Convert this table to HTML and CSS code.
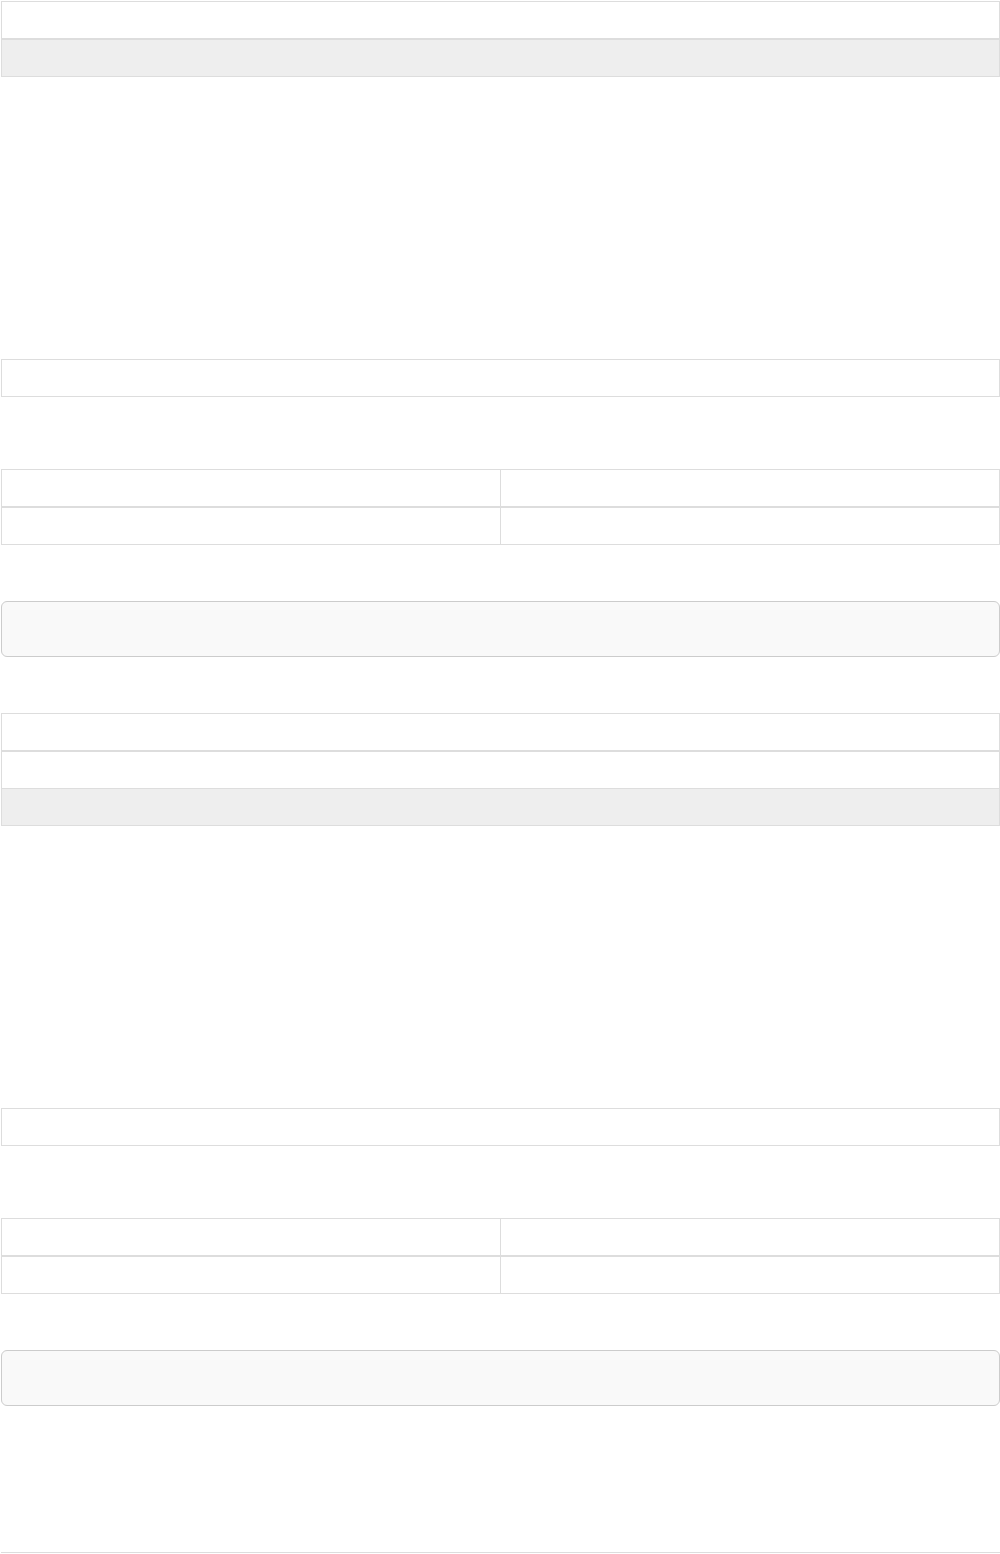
FILE: index.html
```html
<!DOCTYPE html>
<html lang="en">
<head>
  <meta charset="UTF-8" />
  <title>Tables</title>
  <link rel="stylesheet" href="styles.css">
</head>
<body>
  <div class="page">

    <!-- Bloco 1 -->
    <table class="grade grade-topo">
      <thead>
        <tr><th>&nbsp;</th></tr>
      </thead>
      <tbody>
        <tr class="ativo"><td>&nbsp;</td></tr>
      </tbody>
    </table>

    <table class="grade grade-simples">
      <tbody>
        <tr><td>&nbsp;</td></tr>
      </tbody>
    </table>

    <table class="grade grade-dupla">
      <thead>
        <tr><th>&nbsp;</th><th>&nbsp;</th></tr>
      </thead>
      <tbody>
        <tr><td>&nbsp;</td><td>&nbsp;</td></tr>
      </tbody>
    </table>

    <div class="caixa">&nbsp;</div>

    <!-- Bloco 2 -->
    <table class="grade grade-lista">
      <thead>
        <tr><th>&nbsp;</th></tr>
      </thead>
      <tbody>
        <tr><td>&nbsp;</td></tr>
        <tr class="ativo"><td>&nbsp;</td></tr>
      </tbody>
    </table>

    <table class="grade grade-simples">
      <tbody>
        <tr><td>&nbsp;</td></tr>
      </tbody>
    </table>

    <table class="grade grade-dupla">
      <thead>
        <tr><th>&nbsp;</th><th>&nbsp;</th></tr>
      </thead>
      <tbody>
        <tr><td>&nbsp;</td><td>&nbsp;</td></tr>
      </tbody>
    </table>

    <div class="caixa">&nbsp;</div>

    <hr class="rodape" />
  </div>
</body>
</html>
```

FILE: styles.css
```css
body {
  margin: 0;
  padding: 0;
  background: #fff;
  font-family: "Liberation Sans", Arial, sans-serif;
  font-size: 14px;
  line-height: 20px;
  color: #333;
}

.page {
  padding: 1px 0 0 1px;
  width: 999px;
}

.grade {
  width: 100%;
  border-collapse: collapse;
  border: 1px solid #ddd;
  margin: 0;
}

.grade th,
.grade td {
  padding: 8px;
  border: 1px solid #ddd;
  text-align: left;
}

.grade thead th {
  border-bottom: 2px solid #ddd;
}

.grade-dupla th,
.grade-dupla td {
  width: 50%;
}

.ativo td {
  background: #eee;
}

.grade-simples {
  margin-top: 282px;
}

.grade-dupla {
  margin-top: 72px;
}

.caixa {
  margin-top: 56px;
  min-height: 20px;
  padding: 17px;
  background: #f9f9f9;
  border: 1px solid #ccc;
  border-radius: 6px;
}

.grade-lista {
  margin-top: 56px;
}

.rodape {
  margin: 146px 0 0;
  border: 0;
  border-top: 1px solid #ddd;
  height: 0;
}
```
